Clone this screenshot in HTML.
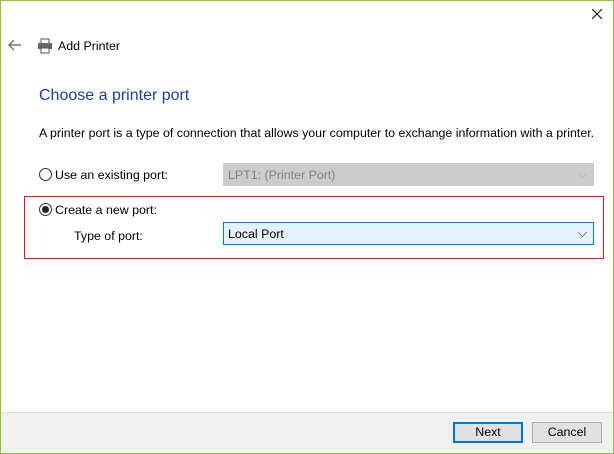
<!DOCTYPE html>
<html><head><style>
*{margin:0;padding:0;box-sizing:border-box}
body{width:614px;height:454px;overflow:hidden;font-family:"Liberation Sans",sans-serif;font-size:12.4px;color:#000;background:#fff;position:relative}
.frame{position:absolute;left:0;top:0;width:614px;height:454px;border:1px solid #8cc43c;}
.a{position:absolute;white-space:nowrap}
.combo{position:absolute;height:23px;border:1px solid;padding:4px 0 0 4px}
.radio{position:absolute;width:13px;height:13px;border:1px solid #333;border-radius:50%;background:#fff}
.btn{position:absolute;top:422px;width:70px;height:21px;border:1px solid #adadad;background:#e1e1e1;text-align:center;line-height:19px}
</style></head><body>
<div class="frame"></div>
<svg class="a" style="left:592px;top:9px" width="10" height="10"><path d="M0 0L10 10M10 0L0 10" stroke="#111" stroke-width="1.1"/></svg>
<svg class="a" style="left:8px;top:39px" width="14" height="12"><path d="M1 6H13M6 1L1 6L6 11" stroke="#777" stroke-width="1.4" fill="none"/></svg>
<svg class="a" style="left:37px;top:38px" width="16" height="16"><rect x="4" y="1" width="8" height="5" fill="#fff" stroke="#555"/><rect x="1" y="5" width="14" height="6" fill="#666"/><rect x="4" y="10" width="8" height="5" fill="#fff" stroke="#555"/></svg>
<div class="a" style="left:58px;top:39px">Add Printer</div>
<div class="a" style="left:39px;top:87px;font-size:16px;color:#1a3fa8">Choose a printer port</div>
<div class="a" style="left:39px;top:126px;font-size:12.4px">A printer port is a type of connection that allows your computer to exchange information with a printer.</div>
<div class="radio" style="left:39px;top:168px"></div>
<div class="a" style="left:55px;top:168px">Use an existing port:</div>
<div class="combo" style="left:223px;top:163px;width:371px;background:#ccc;border-color:#ccc;color:#838383">LPT1: (Printer Port)<span style="position:absolute;right:6px;top:3px;color:#aaa">⌵</span></div>
<div class="a" style="left:24px;top:196px;width:580px;height:63px;border:1px solid #e81123"></div>
<div class="radio" style="left:39px;top:203px"><div style="position:absolute;left:2px;top:2px;width:7px;height:7px;border-radius:50%;background:#222"></div></div>
<div class="a" style="left:55px;top:203px">Create a new port:</div>
<div class="a" style="left:74px;top:229px">Type of port:</div>
<div class="combo" style="left:223px;top:222px;width:371px;background:#e5f1fb;border-color:#0078d7">Local Port<span style="position:absolute;right:6px;top:3px;color:#333">⌵</span></div>
<div class="a" style="left:1px;top:412px;width:612px;height:41px;background:#f0f0f0;border-top:1px solid #dfdfdf"></div>
<div class="btn" style="left:453px;border:2px solid #0078d7;line-height:17px">Next</div>
<div class="btn" style="left:532px">Cancel</div>
</body></html>
